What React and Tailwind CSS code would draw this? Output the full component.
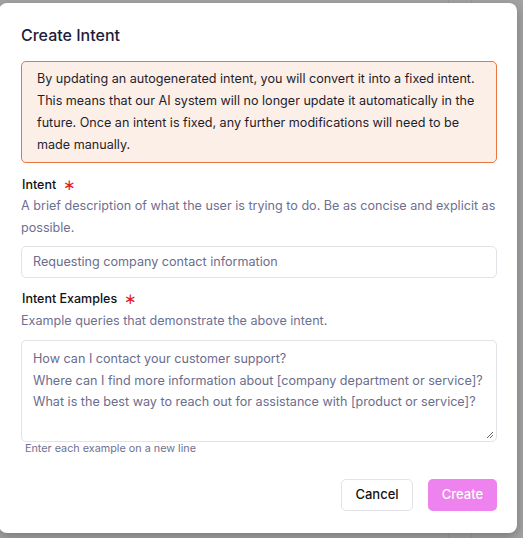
export default function App() {
  return (
    <div
      className="relative w-[523px] h-[538px] overflow-hidden bg-[#a3a3a3]"
      style={{ fontFamily: "Inter, 'Noto Sans', sans-serif" }}
    >
      <div className="absolute inset-y-0 left-[448px] w-px bg-[#9a9a9a]" />
      <div className="absolute inset-y-0 left-[471px] w-px bg-[#9a9a9a]" />
      <div className="absolute left-[-1px] top-[3px] w-[518px] h-[530px] bg-white rounded-lg shadow-[0_4px_12px_rgba(0,0,0,0.25)] pl-[22px] pr-[20px] pt-[20px] pb-[22px] flex flex-col">
        <h2 className="text-[16px] leading-6 font-medium text-[#1d1c3b]">Create Intent</h2>
        <div className="mt-[14px] border border-[#e8773f] bg-[#fcefe8] rounded-[5px] px-[15px] py-[6px] text-[12.6px] leading-[22px] text-[#1f1e2c]">
          By updating an autogenerated intent, you will convert it into a fixed intent. This means that our AI system will no longer update it automatically in the future. Once an intent is fixed, any further modifications will need to be made manually.
        </div>

        <div className="mt-[12px] pl-px flex items-center gap-[7px] text-[12.5px] leading-5 font-medium text-[#111]">
          Intent <span className="text-[#e11d2a] text-[15px]">∗</span>
        </div>
        <p className="mt-0 text-[12.6px] leading-[22px] text-[#6e7092]">
          A brief description of what the user is trying to do. Be as concise and explicit as possible.
        </p>
        <div className="mt-[7px] h-[32px] border border-[#e2e2e8] rounded-[5px] px-[11px] flex items-center text-[12.6px] text-[#6b6d8d]">
          Requesting company contact information
        </div>

        <div className="mt-[11px] pl-px flex items-center gap-[7px] text-[12.5px] leading-5 font-medium text-[#111]">
          Intent Examples <span className="text-[#e11d2a] text-[15px]">∗</span>
        </div>
        <p className="mt-px text-[12.6px] leading-[22px] text-[#6e7092]">
          Example queries that demonstrate the above intent.
        </p>
        <div className="relative mt-[8px] h-[102px] border border-[#e2e2e8] rounded-[5px] px-[11px] pt-[7px] text-[12.6px] leading-[21.5px] text-[#6b6d8d]">
          <div className="whitespace-nowrap">How can I contact your customer support?</div>
          <div className="whitespace-nowrap">Where can I find more information about [company department or service]?</div>
          <div className="whitespace-nowrap">What is the best way to reach out for assistance with [product or service]?</div>
          <svg className="absolute right-[2px] bottom-[2px]" width="9" height="9" viewBox="0 0 9 9">
            <path d="M8 2 L2 8 M8 5 L5 8" stroke="#666" strokeWidth="1" />
          </svg>
        </div>
        <p className="mt-0 pl-[4px] text-[10.8px] leading-[14px] text-[#6e7092]">Enter each example on a new line</p>

        <div className="mt-[23px] flex justify-end gap-[15px]">
          <button className="h-[32px] w-[72px] border border-[#e2e2e8] rounded-[5px] bg-white text-[13px] font-medium text-[#111]">
            Cancel
          </button>
          <button className="h-[32px] w-[69px] rounded-[5px] bg-[#ee82ee] text-[13px] font-medium text-white">
            Create
          </button>
        </div>
      </div>
    </div>
  );
}
